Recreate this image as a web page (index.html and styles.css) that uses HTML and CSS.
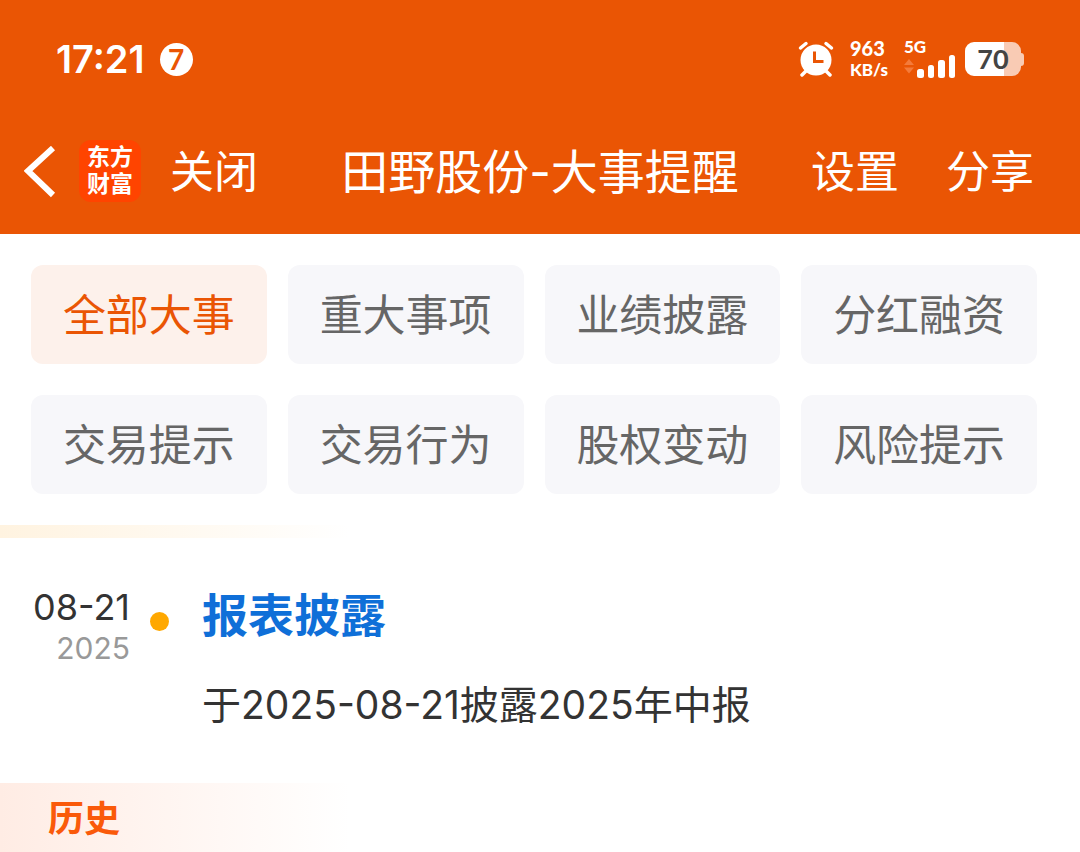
FILE: index.html
```
<!DOCTYPE html>
<html lang="zh-CN">
<head>
  <meta charset="utf-8">
  <meta name="viewport" content="width=device-width, initial-scale=1">
  <title>田野股份-大事提醒</title>
  <link rel="stylesheet" href="styles.css">
</head>
<body>
  <header class="header">
    <div class="status">
      <span class="status-time">17:21</span>
      <span class="status-count">7</span>
      <div class="status-right">
        <svg class="icon-alarm" width="36" height="36" viewBox="0 0 36 36" fill="none" stroke="#fff" stroke-linecap="round">
          <circle cx="18" cy="19" r="15.5" fill="#fff" stroke="none"/>
          <path d="M2.500 7 8 2.500M33.500 7 28 2.500" stroke-width="3.500"/>
          <path d="M8 30l-4 4M28 30l4 4" stroke-width="3.500"/>
          <path d="M16.500 12v8.500H24" stroke="#ea5504" stroke-width="3" stroke-linecap="square"/>
        </svg>
        <div class="status-speed">
          <span class="speed-value">963</span>
          <span class="speed-unit">KB/s</span>
        </div>
        <div class="status-signal">
          <span class="signal-type">5G</span>
          <svg width="52" height="22" viewBox="0 0 52 22">
            <path d="M0 8l5-6 5 6zM0 10.500l5 6 5-6z" fill="#f47b3b"/>
            <g fill="#fff">
              <rect x="13" y="12" width="7" height="9" rx="2.500"/>
              <rect x="24" y="8" width="6" height="13" rx="2.500"/>
              <rect x="34" y="3" width="7" height="18" rx="2.500"/>
              <rect x="45" y="-2" width="6" height="23" rx="2.500"/>
            </g>
          </svg>
        </div>
        <div class="battery"><div class="battery-body">70</div></div>
      </div>
    </div>
    <nav class="nav">
      <div class="nav-left">
        <button class="nav-back" type="button" aria-label="返回">
          <svg width="32" height="52" viewBox="0 0 32 52" fill="none" stroke="#fff" stroke-width="6">
            <path d="M29 2 4 25l25 24"/>
          </svg>
        </button>
        <a class="logo" href="#"><span>东方</span><span>财富</span></a>
        <button class="nav-btn" type="button">关闭</button>
      </div>
      <h1 class="nav-title">田野股份-大事提醒</h1>
      <div class="nav-right">
        <button class="nav-btn" type="button">设置</button>
        <button class="nav-btn" type="button">分享</button>
      </div>
    </nav>
  </header>

  <main>
    <div class="tabs">
      <button class="tab tab-active" type="button">全部大事</button>
      <button class="tab" type="button">重大事项</button>
      <button class="tab" type="button">业绩披露</button>
      <button class="tab" type="button">分红融资</button>
      <button class="tab" type="button">交易提示</button>
      <button class="tab" type="button">交易行为</button>
      <button class="tab" type="button">股权变动</button>
      <button class="tab" type="button">风险提示</button>
    </div>

    <div class="strip"></div>

    <article class="event">
      <time class="event-date" datetime="2025-08-21">
        <span class="event-day">08-21</span>
        <span class="event-year">2025</span>
      </time>
      <span class="event-dot"></span>
      <div class="event-body">
        <h2 class="event-title">报表披露</h2>
        <p class="event-text">于2025-08-21披露2025年中报</p>
      </div>
    </article>

    <h2 class="history">历史</h2>
  </main>
</body>
</html>
```

FILE: styles.css
```
/* Global styling */

* {
  box-sizing: border-box;
}

body {
  margin: 0;
  background-color: #fff;
  color: #333;
  font-family: Inter, "Noto Sans CJK SC", sans-serif;
}

h1, h2, p {
  margin: 0;
}

button {
  padding: 0;
  border: 0;
  background: none;
  color: inherit;
  font-family: inherit;
  cursor: pointer;
}

svg {
  display: block;
}

/* Header */

.header {
  background-color: #ea5504;
  color: #fff;
}

.status {
  display: flex;
  align-items: center;
  height: 118px;
  padding: 0 56px;
}

.status-time {
  font-size: 38px;
  font-weight: 600;
}

.status-count {
  width: 33px;
  height: 33px;
  margin-left: 15px;
  border-radius: 50%;
  background-color: #fff;
  color: #ea5504;
  font-family: Lato, sans-serif;
  font-size: 28px;
  font-weight: 700;
  line-height: 33px;
  text-align: center;
}

.status-right {
  display: flex;
  align-items: center;
  margin-left: auto;
}

.status-speed {
  display: flex;
  flex-direction: column;
  width: 38px;
  margin: 0 16px;
  font-family: Lato, sans-serif;
  font-weight: 900;
  line-height: 21px;
}

.speed-value {
  font-size: 20px;
}

.speed-unit {
  font-size: 17px;
}

.status-signal {
  margin-right: 9px;
}

.signal-type {
  display: block;
  margin-bottom: 2px;
  font-family: Lato, sans-serif;
  font-size: 17px;
  font-weight: 900;
  line-height: 16px;
}

.status-signal svg {
  overflow: visible;
}

.battery {
  display: flex;
  align-items: center;
}

.battery-body {
  width: 56px;
  height: 34px;
  border-radius: 9px;
  background: linear-gradient(to right, #fff 70%, #f9cbb4 70%);
  color: #444;
  font-family: Lato, sans-serif;
  font-size: 27px;
  font-weight: 700;
  line-height: 34px;
  text-align: center;
}

.battery:after {
  content: '';
  width: 3px;
  height: 13px;
  border-radius: 0 3px 3px 0;
  background-color: #f9cbb4;
}

.nav {
  display: grid;
  grid-template-columns: 1fr auto 1fr;
  align-items: center;
  height: 116px;
  padding: 0 24px 8px;
}

.nav-left, .nav-right {
  display: flex;
  align-items: center;
}

.nav-right {
  justify-content: flex-end;
  gap: 47px;
  padding-right: 22px;
}

.nav-btn {
  font-size: 44px;
  line-height: 64px;
  white-space: nowrap;
}

.nav-title {
  font-size: 47px;
  font-weight: 400;
  line-height: 64px;
  white-space: nowrap;
}

.logo {
  display: flex;
  flex-direction: column;
  align-items: center;
  justify-content: center;
  width: 62px;
  height: 62px;
  margin: 0 29px 2px 23px;
  border-radius: 12px;
  background-color: #ff4400;
  color: #fff;
  font-size: 23px;
  font-weight: 700;
  line-height: 27px;
  text-decoration: none;
}

/* Filter buttons */

.tabs {
  display: grid;
  grid-template-columns: repeat(4, 1fr);
  gap: 31px 21px;
  padding: 31px 43px 31px 31px;
}

.tab {
  height: 99px;
  padding-bottom: 6px;
  border-radius: 12px;
  background-color: #f7f7fa;
  color: #666;
  font-size: 43px;
}

.tab-active {
  background-color: #fdf1eb;
  color: #ea5504;
}

/* Timeline */

.strip {
  height: 13px;
  background: linear-gradient(to right, #fff3e0, #fff 350px);
}

.event {
  display: flex;
  padding: 45px 31px 46px;
}

.event-date {
  width: 99px;
  padding-top: 4px;
  text-align: right;
}

.event-day, .event-year {
  display: block;
  line-height: 41px;
}

.event-day {
  font-size: 36px;
}

.event-year {
  color: #999;
  font-size: 30px;
}

.event-dot {
  width: 19px;
  height: 19px;
  margin: 29px 33px 0 20px;
  border-radius: 50%;
  background-color: #ffa800;
}

.event-title {
  color: #0f6fd8;
  font-size: 46px;
  font-weight: 700;
  line-height: 64px;
}

.event-text {
  margin-top: 26px;
  font-size: 39px;
  line-height: 64px;
}

.history {
  padding: 4px 48px;
  background: linear-gradient(to right, #ffece4, #fff 350px);
  color: #fa5a0a;
  font-size: 36px;
  font-weight: 700;
  line-height: 64px;
}
```
